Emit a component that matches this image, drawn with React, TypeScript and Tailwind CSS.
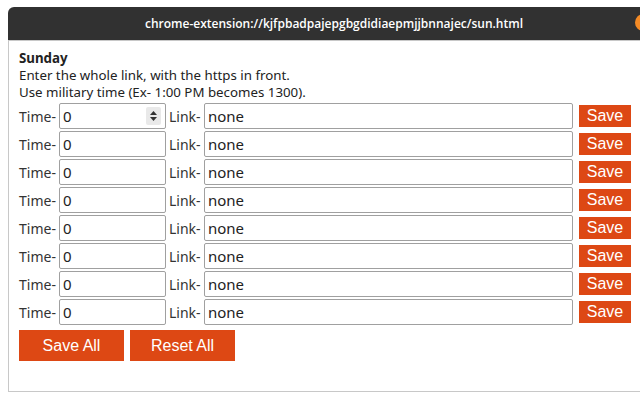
export default function App() {
  const rows = [0, 1, 2, 3, 4, 5, 6, 7];
  return (
    <div className="w-[640px] h-[400px] bg-white overflow-hidden relative font-['Noto_Sans',sans-serif]">
      <div className="ml-[8px] mt-[7px] w-[660px] h-[385px] flex flex-col">
        <div className="h-[33px] bg-[#313131] rounded-tl-[6px] flex items-center relative">
          <div className="w-[652px] text-center text-white text-[12px] font-semibold font-['Open_Sans',sans-serif]">
            chrome-extension://kjfpbadpajepgbgdidiaepmjjbnnajec/sun.html
          </div>
          <div className="absolute left-[627px] top-[7px] w-[17px] h-[17px] rounded-full bg-[#f48a25]" />
        </div>
        <div className="flex-1 border-t border-l border-b border-[#c8c8c8] pl-[10px] pt-[9px] text-[#222] text-[13.3px] leading-[17px]">
          <div className="font-bold">Sunday</div>
          <div>Enter the whole link, with the https in front.</div>
          <div>Use military time (Ex- 1:00 PM becomes 1300).</div>
          <div className="mt-[2px] flex flex-col gap-[2px]">
            {rows.map((i) => (
              <div key={i} className="flex items-center h-[26px]">
                <span className="w-[40px] text-[14px] text-[#333]">Time-</span>
                <div className="relative">
                  <input
                    readOnly
                    value="0"
                    className="w-[107px] h-[26px] border border-[#a0a0a0] rounded-[2px] px-[3px] text-[15px] text-[#222] outline-none"
                  />
                  {i === 0 && (
                    <div className="absolute right-[5px] top-[4px] w-[15px] h-[18px] bg-[#e9e9e9] rounded-[2px] flex items-center justify-center">
                      <svg width="9" height="12" viewBox="0 0 9 12">
                        <path d="M4.5 1 L8 5 L1 5 Z" fill="#333" />
                        <path d="M4.5 11 L8 7 L1 7 Z" fill="#333" />
                      </svg>
                    </div>
                  )}
                </div>
                <span className="ml-[3px] w-[35px] text-[14px] text-[#333]">Link-</span>
                <input
                  readOnly
                  value="none"
                  className="w-[369px] h-[26px] border border-[#a0a0a0] rounded-[2px] px-[3px] text-[15px] text-[#222] outline-none"
                />
                <button className="ml-[6px] w-[52px] h-[22px] bg-[#dd4814] text-white text-[16px] leading-[22px] font-['Liberation_Sans',sans-serif]">
                  Save
                </button>
              </div>
            ))}
          </div>
          <div className="mt-[5px] flex gap-[6px]">
            <button className="w-[105px] h-[31px] bg-[#dd4814] text-white text-[16px] font-['Liberation_Sans',sans-serif]">
              Save All
            </button>
            <button className="w-[105px] h-[31px] bg-[#dd4814] text-white text-[16px] font-['Liberation_Sans',sans-serif]">
              Reset All
            </button>
          </div>
        </div>
      </div>
    </div>
  );
}
